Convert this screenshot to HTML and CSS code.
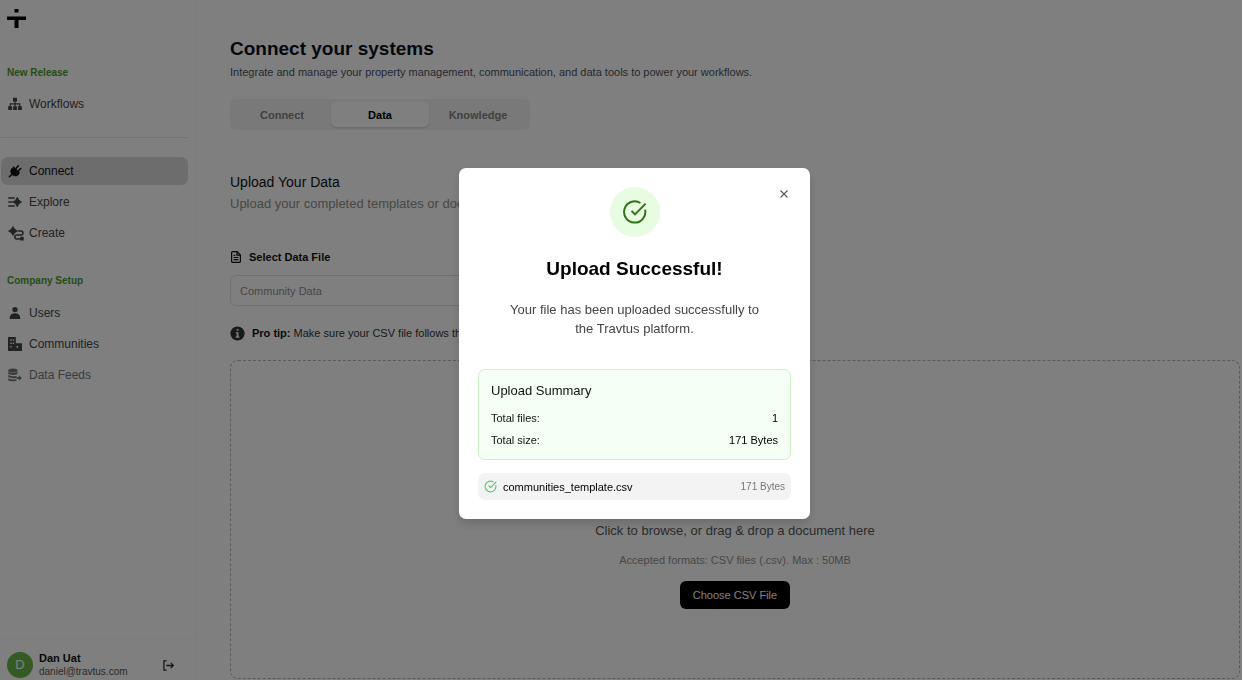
FILE: index.html
```html
<!DOCTYPE html>
<html lang="en">
<head>
<meta charset="utf-8">
<meta name="viewport" content="width=device-width, initial-scale=1">
<title>Connect your systems</title>
<link rel="stylesheet" href="styles.css">
</head>
<body>
<div class="app">
  <aside class="sidebar">
    <a class="logo" href="#" aria-label="Home">
      <svg width="19" height="19" viewBox="0 0 19 19" fill="currentColor"><path d="M7.500 0h4v3.500h-4zM0 7.500h19V11h-7.500v8h-4v-8H0z"/></svg>
    </a>
    <nav class="nav">
      <h2 class="nav-title">New Release</h2>
      <a class="nav-link" href="#">
        <svg class="icon" viewBox="0 0 14 14" fill="currentColor"><path d="M5 .8h4v3.800H7.600v1.700h4.800v3h1.400V13h-3.800V9.300h1.200V7.500H7.600v1.800h1.300V13H5.100V9.300h1.300V7.500H2.800v1.800H4V13H.2V9.300h1.400v-3h4.800V4.600H5z"/></svg>
        Workflows
      </a>
      <hr class="nav-rule">
      <a class="nav-link nav-link-active" href="#" aria-current="page">
        <svg class="icon" viewBox="0 0 14 14" fill="none" stroke="currentColor" stroke-linecap="round"><path stroke-width="1.600" d="M8 4.500l2.300-2.700M10.300 6.900l2.500-2.400M3.800 10.200 1.400 12.700"/><path fill="currentColor" stroke-width="1" stroke-linejoin="round" d="M5.800 3.300l5.600 5.300q-.6 2.900-3.300 3.300-2.300.2-3.900-1.300Q2.500 9 2.800 6.700 3.300 4 5.800 3.300z"/></svg>
        Connect
      </a>
      <a class="nav-link" href="#">
        <svg class="icon" viewBox="0 0 14 14" fill="currentColor"><path d="M.2 2.200h6.600v1.500H.2zM.2 6.200h4.600v1.500H.2zM.2 10.200h6.600v1.500H.2z"/><path d="M9.300 2.200Q10.500 5.800 13.600 7q-3.100 1.200-4.300 4.800Q8.100 8.200 5 7q3.100-1.200 4.300-4.800z" stroke="currentColor" stroke-width=".8" stroke-linejoin="round"/></svg>
        Explore
      </a>
      <a class="nav-link" href="#">
        <svg class="icon icon-wide" viewBox="0 0 16 15"><path fill="currentColor" stroke="currentColor" stroke-width=".8" stroke-linejoin="round" d="M5 .5Q6.100 3.900 9.500 5 6.100 6.100 5 9.500 3.900 6.100.5 5 3.900 3.900 5 .5z"/><path fill="currentColor" d="M12.200 10.800h3.500v3.700h-3.500z"/><path fill="none" stroke="currentColor" stroke-width="1.500" d="M10 5h3a2 2 0 0 1 0 4H8.800a2 2 0 0 0 0 4h4"/></svg>
        Create
      </a>
      <h2 class="nav-title nav-title-later">Company Setup</h2>
      <a class="nav-link" href="#">
        <svg class="icon" viewBox="0 0 14 14" fill="currentColor"><circle cx="7" cy="3.600" r="2.700"/><path d="M1.800 13v-1.600Q2.400 7.300 7 7.300t5.200 4.100V13z"/></svg>
        Users
      </a>
      <a class="nav-link" href="#">
        <svg class="icon" viewBox="0 0 14 14" fill="currentColor"><path fill-rule="evenodd" d="M0 0h7.800v6.300H14V14H0zM2.300 2.200v1.500h1.400V2.200zm2.500 0v1.500h1.300V2.200zM2.300 5.600v1.500h1.400V5.600zm2.500 0v1.500h1.300V5.600zM2.300 9.100v1.500h1.400V9.100zm6.200 0v1.700h1.700V9.100z"/></svg>
        Communities
      </a>
      <a class="nav-link nav-link-muted" href="#">
        <svg class="icon" viewBox="0 0 14 14" fill="currentColor"><ellipse cx="4.900" cy="2.400" rx="4.700" ry="2"/><path d="M.2 3.900q4.700 2 9.400 0v2Q4.900 8 .2 5.900zM.2 7.100q4.700 2 8.400.6v1.200L8.300 10Q3.500 10.700.2 9.100zM.2 10.300Q3.500 12 8.300 11.300l.3 1.500Q3.500 14 .2 12.600z"/><path d="M8.600 9h2.200V7.300L14 10l-3.200 2.800v-1.700H8.600z"/></svg>
        Data Feeds
      </a>
    </nav>
    <footer class="account">
      <span class="avatar" aria-hidden="true">D</span>
      <div class="account-text">
        <strong class="account-name">Dan Uat</strong>
        <span class="account-mail">daniel@travtus.com</span>
      </div>
      <button class="icon-button logout" type="button" aria-label="Log out">
        <svg width="11" height="11" viewBox="0 0 12 12" fill="none" stroke="currentColor" stroke-width="1.400"><path d="M4 1H1v10h3M3.500 6H11M8.500 3.300 11.200 6 8.500 8.700"/></svg>
      </button>
    </footer>
  </aside>

  <main class="main">
    <h1 class="page-title">Connect your systems</h1>
    <p class="page-lead">Integrate and manage your property management, communication, and data tools to power your workflows.</p>
    <div class="tabs" role="tablist">
      <button class="tab" type="button" role="tab" aria-selected="false">Connect</button>
      <button class="tab tab-active" type="button" role="tab" aria-selected="true">Data</button>
      <button class="tab" type="button" role="tab" aria-selected="false">Knowledge</button>
    </div>
    <h2 class="section-title">Upload Your Data</h2>
    <p class="section-lead">Upload your completed templates or documents</p>
    <label class="field-label" for="data-file">
      <svg width="12" height="12" viewBox="0 0 12 12" fill="none" stroke="currentColor" stroke-width="1.200"><path d="M7.200.7H2.600q-1 0-1 1v8.600q0 1 1 1h6.800q1 0 1-1V3.900zM7 .9v3.200h3.200M3.600 4.300h1.700M3.600 6.500h4.800M3.600 8.700h4.800"/></svg>
      Select Data File
    </label>
    <select class="select" id="data-file">
      <option>Community Data</option>
    </select>
    <p class="tip">
      <svg width="15" height="15" viewBox="0 0 15 15"><circle cx="7.500" cy="7.500" r="7.100" fill="currentColor"/><path fill="#fff" d="M6.700 3h1.800v1.800H6.700zM5.800 6.200h2.700v4.300h1v1.300H5.600v-1.300h1.100V7.400h-.9z"/></svg>
      <span><strong>Pro tip:</strong> Make sure your CSV file follows the format.</span>
    </p>
    <section class="dropzone">
      <p class="drop-text">Click to browse, or drag &amp; drop a document here</p>
      <p class="drop-hint">Accepted formats: CSV files (.csv). Max : 50MB</p>
      <button class="choose" type="button">Choose CSV File</button>
    </section>
  </main>
</div>

<div class="overlay">
  <div class="modal" role="dialog" aria-modal="true" aria-labelledby="modal-title">
    <button class="icon-button close" type="button" aria-label="Close">
      <svg width="8" height="8" viewBox="0 0 8 8" fill="none" stroke="currentColor" stroke-width="1.100"><path d="M.5.5l7 7M7.500.5l-7 7"/></svg>
    </button>
    <div class="badge">
      <svg width="26" height="26" viewBox="0 0 24 24" fill="none" stroke="currentColor" stroke-width="1.800"><path d="M21.300 9.800A9.800 9.800 0 1 1 17 3.700"/><path d="m8.800 11 3.200 3.200L21.800 4.300"/></svg>
    </div>
    <h2 class="modal-title" id="modal-title">Upload Successful!</h2>
    <p class="modal-text">Your file has been uploaded successfully to the Travtus platform.</p>
    <section class="summary">
      <h3 class="summary-title">Upload Summary</h3>
      <dl class="summary-list">
        <div class="summary-row"><dt>Total files:</dt><dd>1</dd></div>
        <div class="summary-row"><dt>Total size:</dt><dd>171 Bytes</dd></div>
      </dl>
    </section>
    <div class="file">
      <svg class="file-icon" width="13" height="13" viewBox="0 0 24 24" fill="none" stroke="currentColor" stroke-width="2" stroke-linecap="round" stroke-linejoin="round"><path d="M21.800 10A10 10 0 1 1 17 3.340"/><path d="m9 11 3 3L22 4"/></svg>
      <span class="file-name">communities_template.csv</span>
      <span class="file-size">171 Bytes</span>
    </div>
  </div>
</div>
</body>
</html>
```

FILE: styles.css
```css
* { box-sizing: border-box; }

body {
  margin: 0;
  background: #fff;
  color: #111;
  font: 11px/16px "Liberation Sans", Arial, sans-serif;
}

h1, h2, h3, p, dl, dd { margin: 0; font-weight: normal; }
button, select { font: inherit; }
button { border: 0; cursor: pointer; }
svg { display: block; flex: none; }

.app {
  display: grid;
  grid-template-columns: 196px 1fr;
  min-height: 100vh;
}

/* Sidebar */
.sidebar {
  display: flex;
  flex-direction: column;
  border-right: 1px solid #f8f8f8;
}

.logo { padding: 9px 7px 0; color: #000; }

.nav {
  display: flex;
  flex-direction: column;
  gap: 3px;
  padding: 37px 7px 0 1px;
}

.nav-title {
  padding-left: 6px;
  margin-bottom: 6px;
  color: #4b9a2c;
  font-size: 10px;
  font-weight: bold;
}

.nav-title-later { margin-top: 23px; margin-bottom: 7px; }

.nav-link {
  display: flex;
  align-items: center;
  gap: 7px;
  height: 28px;
  padding-left: 7px;
  border-radius: 7px;
  color: #444;
  font-size: 12px;
  text-decoration: none;
}

.nav-link-active { background: #dadada; color: #111; }
.nav-link-muted { color: #777; }
.icon { width: 14px; height: 14px; }
.icon-wide { width: 16px; height: 15px; margin-right: -2px; }

.nav-rule {
  width: 100%;
  margin: 16px 0;
  border: 0;
  border-top: 1px solid #e6e6e6;
}

.account {
  display: flex;
  align-items: center;
  gap: 6px;
  margin-top: auto;
  padding: 12px 21px 1px 7px;
  border-top: 1px solid #f8f8f8;
}

.avatar {
  display: grid;
  place-items: center;
  width: 26px;
  height: 26px;
  border-radius: 50%;
  background: #6ab64a;
  color: #fff;
  font-size: 13px;
}

.account-text { display: flex; flex-direction: column; line-height: 14px; }
.account-mail { color: #555; font-size: 10px; }
.icon-button { padding: 0; background: none; color: #333; }
.logout { margin-left: auto; }

/* Page */
.main {
  display: flex;
  flex-direction: column;
  padding: 37px 2px 1px 34px;
}

.page-title {
  color: #0b0f1c;
  font-size: 19px;
  font-weight: bold;
  line-height: 24px;
}

.page-lead { margin-top: 3px; color: #4a5160; }

.tabs {
  display: grid;
  grid-template-columns: repeat(3, 1fr);
  width: 300px;
  margin-top: 19px;
  padding: 3px;
  border-radius: 6px;
  background: #f3f3f3;
}

.tab {
  height: 25px;
  border-radius: 5px;
  background: none;
  color: #808080;
  font-weight: bold;
}

.tab-active {
  background: #fff;
  color: #000;
  box-shadow: 0 1px 2px rgba(0, 0, 0, 0.15);
}

.section-title {
  margin-top: 42px;
  font-size: 14px;
  line-height: 20px;
}

.section-lead {
  margin-top: 2px;
  color: #8f8f8f;
  font-size: 13px;
  line-height: 20px;
}

.field-label {
  display: flex;
  align-items: center;
  gap: 7px;
  margin-top: 35px;
  font-weight: bold;
}

.select {
  width: 450px;
  height: 31px;
  margin-top: 10px;
  padding: 0 9px;
  border: 1px solid #e2e2e2;
  border-radius: 6px;
  background: #fff;
  color: #8f8f8f;
  appearance: none;
}

.tip {
  display: flex;
  align-items: center;
  gap: 7px;
  margin-top: 19px;
  color: #333;
}

.tip strong { color: #111; }

.dropzone {
  display: flex;
  flex: 1;
  flex-direction: column;
  align-items: center;
  justify-content: flex-end;
  min-height: 319px;
  margin-top: 19px;
  padding-bottom: 69px;
  border: 1px dashed #b4b4b4;
  border-radius: 8px;
}

.drop-text { color: #555; font-size: 13px; line-height: 20px; }
.drop-hint { margin-top: 11px; color: #8f8f8f; }

.choose {
  margin-top: 13px;
  padding: 6px 13px;
  border-radius: 6px;
  background: #000;
  color: #fff;
}

/* Dialog */
.overlay {
  position: fixed;
  inset: 0;
  display: flex;
  align-items: center;
  justify-content: center;
  padding: 7px 0 0 27px;
  background: rgba(0, 0, 0, 0.5);
}

.modal {
  position: relative;
  display: flex;
  flex-direction: column;
  width: 351px;
  padding: 19px;
  border-radius: 7px;
  background: #fff;
  box-shadow: 0 5px 10px rgba(0, 0, 0, 0.15);
}

.close {
  position: absolute;
  top: 22px;
  right: 22px;
  color: #555;
}

.badge {
  display: grid;
  place-items: center;
  align-self: center;
  width: 50px;
  height: 50px;
  border-radius: 50%;
  background: #e8fce1;
  color: #2c7417;
}

.modal-title {
  margin-top: 20px;
  color: #000;
  font-size: 19px;
  font-weight: bold;
  line-height: 24px;
  text-align: center;
}

.modal-text {
  margin-top: 19px;
  padding: 0 25px;
  color: #444;
  font-size: 13px;
  line-height: 19px;
  text-align: center;
}

.summary {
  margin-top: 31px;
  padding: 12px 12px 11px;
  border: 1px solid #cdf2c5;
  border-radius: 7px;
  background: #f5fff5;
}

.summary-title { font-size: 13px; line-height: 18px; }

.summary-list {
  display: flex;
  flex-direction: column;
  gap: 6px;
  margin-top: 10px;
}

.summary-row { display: flex; justify-content: space-between; }
.summary-row dd { color: #000; }

.file {
  display: flex;
  align-items: center;
  gap: 6px;
  height: 27px;
  margin-top: 13px;
  padding: 0 6px;
  border-radius: 7px;
  background: #f3f3f3;
}

.file-icon { color: #4fc765; }
.file-name { color: #000; }
.file-size { margin-left: auto; color: #777; font-size: 10px; }
```
